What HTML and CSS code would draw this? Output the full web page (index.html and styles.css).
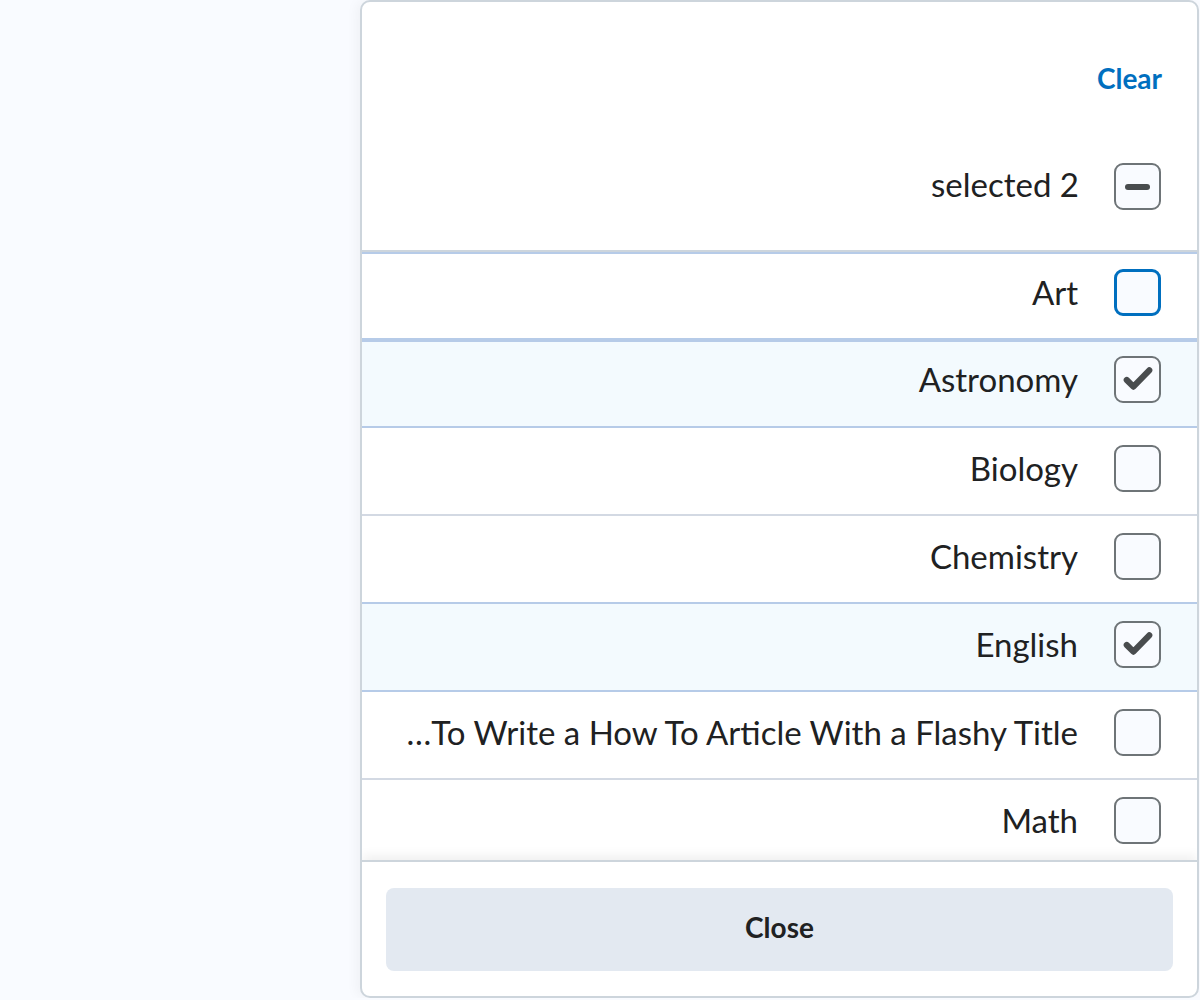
FILE: index.html
```html
<!DOCTYPE html>
<html>
<head>
<meta charset="utf-8">
<link rel="stylesheet" href="styles.css">
</head>
<body>
<div class="dialog">
  <div class="header">
    <div class="clear-row"><span class="clear">Clear</span></div>
    <div class="sel-row">
      <span class="label">selected 2</span>
      <span class="cb"><span class="dash"></span></span>
    </div>
  </div>
  <div class="list">
    <div class="item first sep-blue top-blue"><span class="label">Art</span><span class="cb focus"></span></div>
    <div class="item selected sep-blue top-blue"><span class="label">Astronomy</span><span class="cb"><svg viewBox="0 0 42 42" class="check"><path d="M10.5 21.5 L17 28 L32.5 12"/></svg></span></div>
    <div class="item sep-grey"><span class="label">Biology</span><span class="cb"></span></div>
    <div class="item sep-blue"><span class="label">Chemistry</span><span class="cb"></span></div>
    <div class="item selected sep-blue"><span class="label">English</span><span class="cb"><svg viewBox="0 0 42 42" class="check"><path d="M10.5 21.5 L17 28 L32.5 12"/></svg></span></div>
    <div class="item sep-grey"><span class="label">…To Write a How To Article With a Flashy Title</span><span class="cb"></span></div>
    <div class="item sep-grey"><span class="label">Math</span><span class="cb"></span></div>
  </div>
  <div class="footer">
    <button class="close">Close</button>
  </div>
</div>
</body>
</html>
```
FILE: styles.css
```css
html, body {
  margin: 0;
  padding: 0;
  background: #f9fbff;
  font-family: Lato, "Liberation Sans", sans-serif;
  color: #202122;
}
.dialog {
  box-sizing: border-box;
  margin-left: 360px;
  width: 839px;
  height: 998px;
  background: #fff;
  border: 2px solid #cdd5dc;
  border-radius: 10px;
  box-shadow: -4px 0 12px rgba(0, 0, 0, 0.04);
  display: flex;
  flex-direction: column;
  overflow: hidden;
}
.header {
  height: 248px;
  flex: none;
  border-bottom: 2px solid #cdd5dc;
  padding-right: 36px;
  display: flex;
  flex-direction: column;
  align-items: flex-end;
}
.clear-row {
  margin-top: 57px;
  height: 38px;
  display: flex;
  align-items: center;
  margin-right: -1px;
}
.clear {
  color: #006fbf;
  font-weight: 700;
  font-size: 28px;
}
.sel-row {
  margin-top: 66px;
  display: flex;
  align-items: center;
  gap: 35px;
}
.sel-row .label {
  margin-bottom: 5px;
}
.label {
  font-size: 33px;
  line-height: 40px;
  white-space: nowrap;
}
.cb {
  box-sizing: border-box;
  width: 47px;
  height: 47px;
  border: 2px solid #6e7477;
  border-radius: 9px;
  background: #f9fbff;
  display: flex;
  align-items: center;
  justify-content: center;
  flex: none;
}
.cb.focus {
  border: 3px solid #006fbf;
}
.dash {
  width: 25px;
  height: 6px;
  border-radius: 3px;
  background: #494c4e;
}
.check {
  width: 43px;
  height: 43px;
  fill: none;
  stroke: #494c4e;
  stroke-width: 6;
  stroke-linecap: round;
  stroke-linejoin: round;
}
.list {
  flex: 1;
  overflow: hidden;
}
.item {
  height: 86px;
  box-sizing: content-box;
  display: flex;
  justify-content: flex-end;
  align-items: flex-start;
  padding-right: 36px;
  gap: 36px;
}
.item .cb {
  margin-top: 17px;
}
.item .label {
  margin-top: 20px;
}
.item.first,
.item.selected.top-blue {
  height: 84px;
}
.item.first .cb {
  margin-top: 15px;
}
.item.first .label {
  margin-top: 18px;
}
.item.selected.top-blue .cb {
  margin-top: 14px;
}
.item.selected.top-blue .label {
  margin-top: 17px;
}
.item.top-blue {
  border-top: 2px solid #b6cbe8;
}
.item.sep-blue {
  border-bottom: 2px solid #b6cbe8;
}
.item.sep-grey {
  border-bottom: 2px solid #d3d9e3;
}
.item.selected {
  background: #f3fafe;
}
.footer {
  flex: none;
  border-top: 2px solid #cdd5dc;
  padding: 26px 24px 25px 24px;
  box-shadow: 0 -5px 10px rgba(0, 0, 0, 0.06);
}
.close {
  display: block;
  width: 100%;
  height: 83px;
  padding: 0 0 5px 0;
  border: none;
  border-radius: 8px;
  background: #e3e9f1;
  font-family: Lato, "Liberation Sans", sans-serif;
  font-weight: 700;
  font-size: 28px;
  color: #202122;
}
```
